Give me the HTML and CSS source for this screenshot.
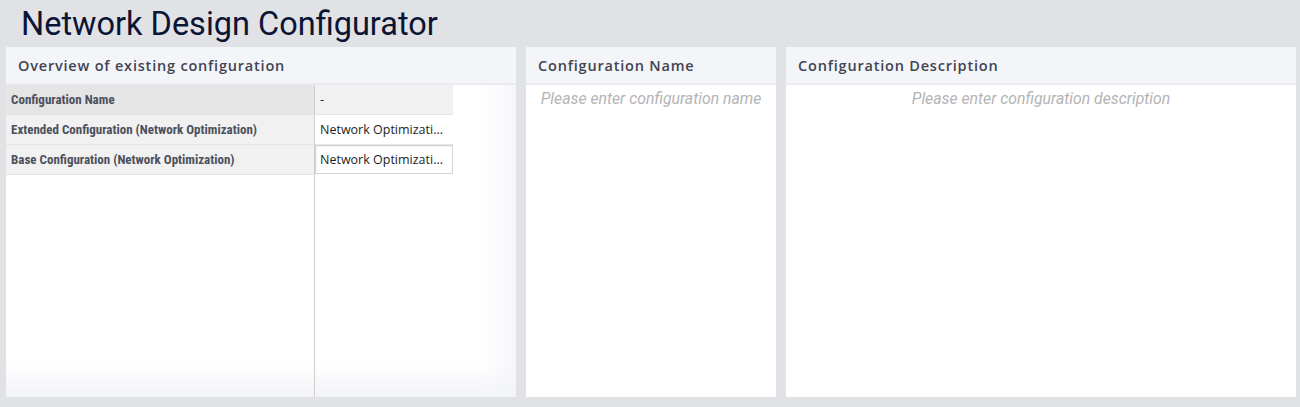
FILE: index.html
```html
<!DOCTYPE html>
<html>
<head>
<meta charset="utf-8">
<link rel="stylesheet" href="styles.css">
</head>
<body>
<h1 class="title">Network Design Configurator</h1>
<div class="main">
  <section class="panel panel-wide">
    <div class="panel-head">Overview of existing configuration</div>
    <div class="panel-body overview">
      <div class="col-labels">
        <div class="cell label head-row">Configuration Name</div>
        <div class="cell label">Extended Configuration (Network Optimization)</div>
        <div class="cell label">Base Configuration (Network Optimization)</div>
      </div>
      <div class="col-values">
        <div class="cell value head-row">-</div>
        <div class="cell value">Network Optimizati...</div>
        <div class="cell value focused">Network Optimizati...</div>
      </div>
    </div>
  </section>
  <section class="panel panel-narrow">
    <div class="panel-head">Configuration Name</div>
    <div class="panel-body">
      <div class="placeholder">Please enter configuration name</div>
    </div>
  </section>
  <section class="panel panel-wide">
    <div class="panel-head">Configuration Description</div>
    <div class="panel-body">
      <div class="placeholder">Please enter configuration description</div>
    </div>
  </section>
</div>
</body>
</html>
```
FILE: styles.css
```css
html, body {
  margin: 0;
  padding: 0;
}
body {
  background: #e1e2e6;
  width: 1300px;
  height: 407px;
  overflow: hidden;
  font-family: Roboto, "Liberation Sans", sans-serif;
}
.title {
  margin: 0;
  height: 47px;
  box-sizing: border-box;
  padding: 5px 0 0 21px;
  font-family: Roboto, sans-serif;
  font-weight: 400;
  font-size: 32.5px;
  line-height: 38px;
  color: #0b1533;
}
.main {
  display: flex;
  gap: 10px;
  padding: 0 4px 0 6px;
  height: 350px;
}
.panel {
  background: #fff;
  display: flex;
  flex-direction: column;
}
.panel-wide { width: 510px; }
.panel-narrow { width: 250px; }
.panel-head {
  height: 36px;
  flex: none;
  background: #f4f5f9;
  border-bottom: 2px solid #eaebf0;
  box-sizing: content-box;
  padding-left: 12px;
  display: flex;
  align-items: center;
  font-family: "Open Sans", sans-serif;
  font-weight: 600;
  font-size: 14.5px;
  letter-spacing: 0.8px;
  color: #3f4452;
}
.panel-body {
  flex: 1;
  min-height: 0;
}
.overview {
  display: flex;
  background:
    linear-gradient(to bottom, rgba(244,245,249,0) calc(100% - 34px), #f3f4f8),
    linear-gradient(to right, #fff calc(100% - 36px), #f5f6fa);
}
.col-labels {
  width: 308px;
}
.col-values {
  width: 138px;
  border-left: 1px solid #cfcfcf;
}
.cell {
  height: 29px;
  border-bottom: 1px solid #e4e4e4;
  display: flex;
  align-items: center;
  white-space: nowrap;
  overflow: hidden;
}
.label {
  background: #f1f1f1;
  padding-left: 5px;
  font-family: "Roboto Condensed", "Liberation Sans Narrow", Roboto, sans-serif;
  font-weight: 700;
  font-size: 13px;
  color: #4b505c;
}
.label.head-row {
  background: #e5e5e5;
}
.value {
  background: #fff;
  padding-left: 5px;
  font-family: "Open Sans", sans-serif;
  font-size: 12.5px;
  color: #1d1d1d;
}
.value.head-row {
  background: #f1f1f1;
}
.value.focused {
  box-shadow: inset 0 0 0 1px #d4d4d4, inset 1px 1px 2px rgba(0,0,0,0.15);
  border-bottom-color: transparent;
}
.placeholder {
  text-align: center;
  padding-top: 4px;
  font-family: Roboto, sans-serif;
  font-style: italic;
  font-size: 15.8px;
  line-height: 20px;
  color: #b4b4b6;
}
```
